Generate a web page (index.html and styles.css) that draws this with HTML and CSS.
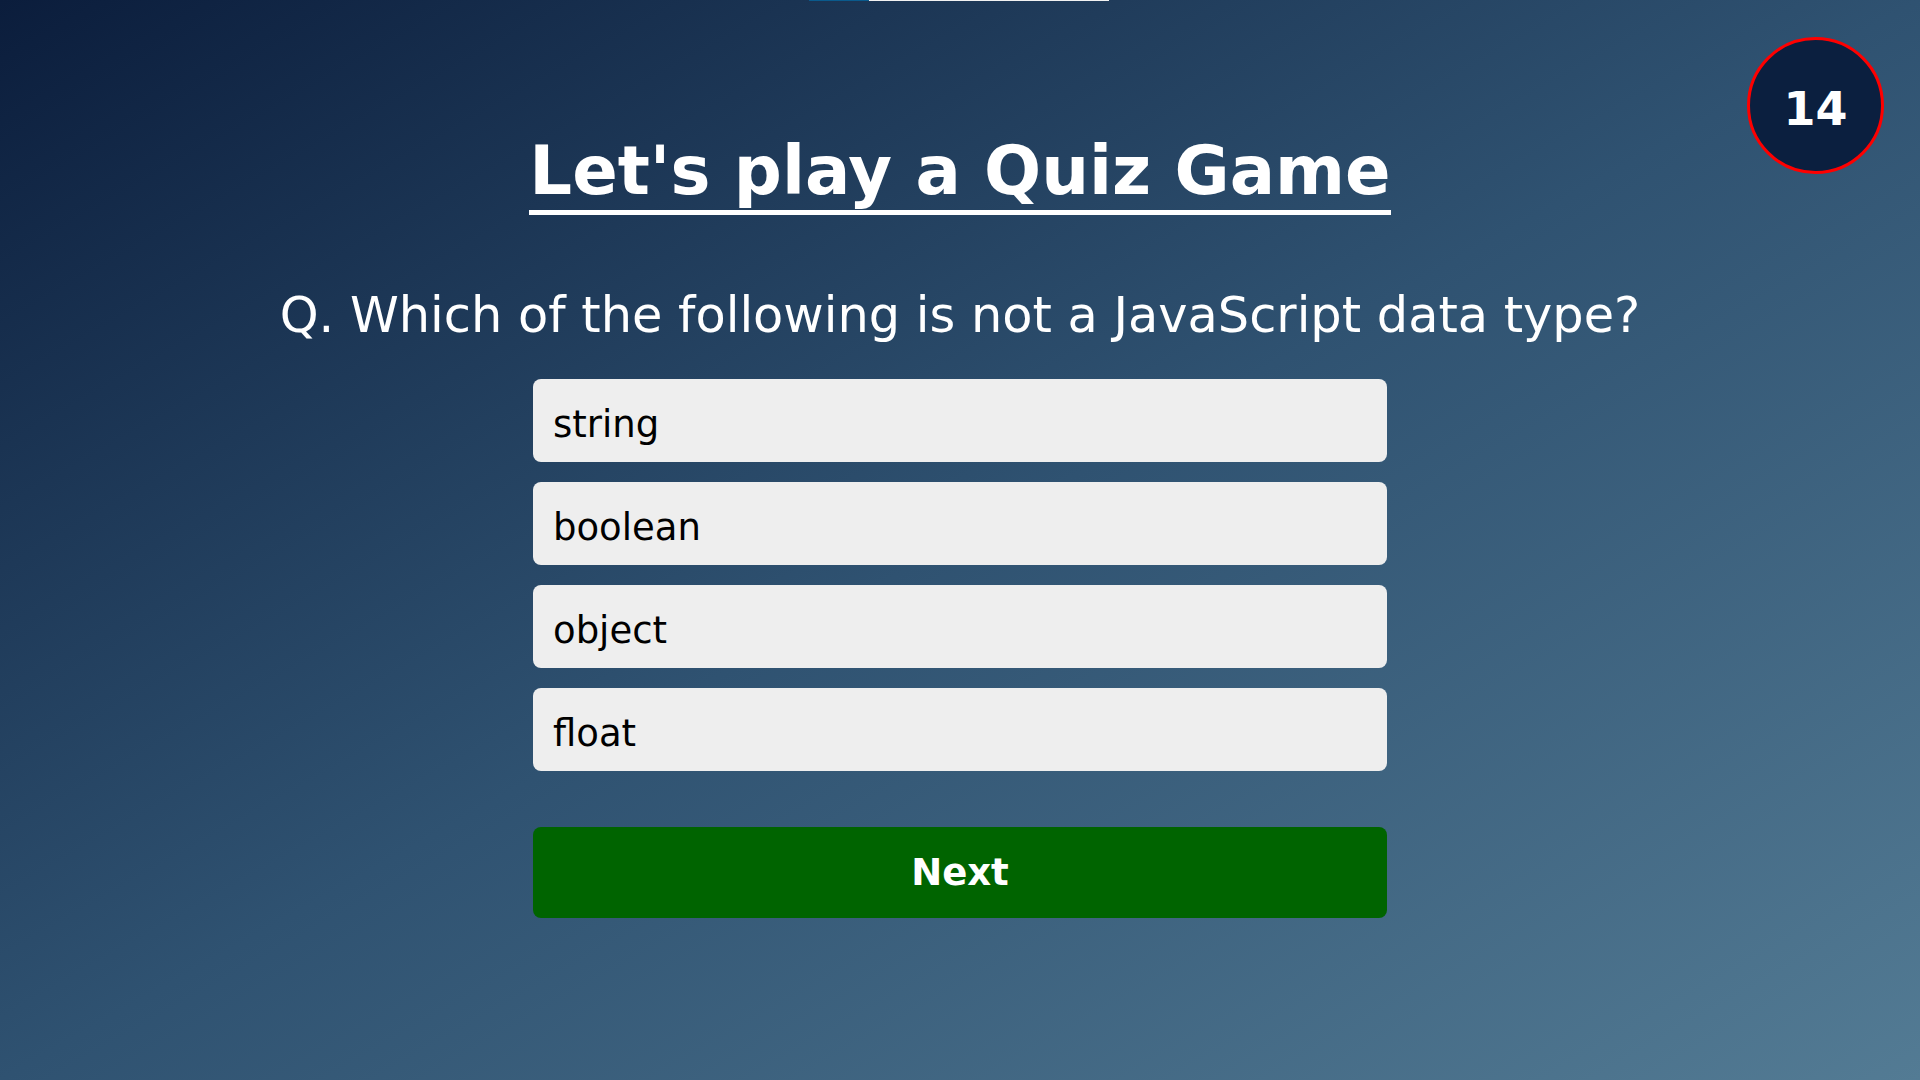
FILE: index.html
```html
<!DOCTYPE html>
<html lang="en">
<head>
<meta charset="utf-8">
<title>Quiz Game</title>
<link rel="stylesheet" href="styles.css">
</head>
<body>
<div class="progress"><div class="progress-fill" style="width:20%"></div></div>
<div class="timer">14</div>
<main class="quiz">
  <h1 class="title">Let's play a Quiz Game</h1>
  <p class="question">Q. Which of the following is not a JavaScript data type?</p>
  <div class="options">
    <button class="option">string</button>
    <button class="option">boolean</button>
    <button class="option">object</button>
    <button class="option">float</button>
  </div>
  <button class="next">Next</button>
</main>
</body>
</html>
```
FILE: styles.css
```css
html, body {
  margin: 0;
  padding: 0;
  height: 100%;
}
body {
  background: linear-gradient(to bottom right, #0b1d3c 0%, #2f5271 50%, #537b94 100%);
  font-family: "DejaVu Sans", Verdana, sans-serif;
  color: #fff;
  overflow: hidden;
  position: relative;
}
.progress {
  width: 300px;
  height: 1px;
  margin: 0 auto 0 809px;
  background: #f2f2f2;
}
.progress-fill {
  height: 100%;
  background: #0a5a8c;
}
.timer {
  position: absolute;
  top: 37px;
  right: 36px;
  width: 131px;
  height: 125px;
  box-sizing: content-box;
  border: 3px solid #ff0000;
  border-radius: 50%;
  background: #0b1f3f;
  display: flex;
  align-items: center;
  justify-content: center;
  padding-top: 6px;
  font-size: 46px;
  font-weight: bold;
  line-height: 1;
  color: #fff;
}
.quiz {
  display: flex;
  flex-direction: column;
  align-items: center;
}
.title {
  display: inline-block;
  margin: 131px 0 0;
  font-size: 67.2px;
  font-weight: bold;
  line-height: normal;
  border-bottom: 5px solid #fff;
}
.question {
  margin: 71px 0 0;
  font-size: 49.4px;
  line-height: normal;
}
.options {
  margin-top: 35px;
  width: 854px;
  display: flex;
  flex-direction: column;
  gap: 20px;
}
.option {
  height: 83px;
  border: none;
  border-radius: 8px;
  background: #eeeeee;
  color: #000;
  font-family: "DejaVu Sans", Verdana, sans-serif;
  font-size: 37px;
  text-align: left;
  padding: 7px 20px 0;
}
.next {
  margin-top: 56px;
  width: 854px;
  height: 91px;
  border: none;
  border-radius: 8px;
  background: #006400;
  color: #fff;
  font-family: "DejaVu Sans", Verdana, sans-serif;
  font-size: 37px;
  font-weight: bold;
}
```
